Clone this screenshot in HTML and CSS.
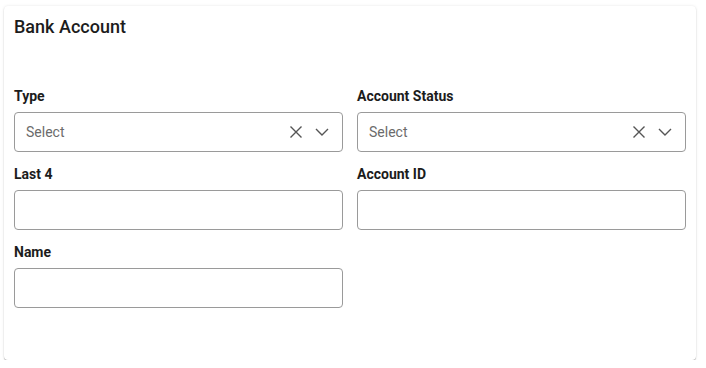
FILE: index.html
```html
<!DOCTYPE html>
<html>
<head>
<meta charset="utf-8">
<link rel="stylesheet" href="styles.css">
</head>
<body>
<div class="card">
  <h2 class="title">Bank Account</h2>
  <div class="grid">
    <div class="field">
      <label class="label">Type</label>
      <div class="input select">
        <span class="placeholder">Select</span>
        <span class="icons">
          <svg class="ic" width="16" height="16" viewBox="0 0 16 16"><path d="M2.5 2.5 L13.5 13.5 M13.5 2.5 L2.5 13.5" stroke="#555" stroke-width="1.4" fill="none"/></svg>
          <svg class="ic" width="16" height="16" viewBox="0 0 16 16"><path d="M2 5 L8 11 L14 5" stroke="#555" stroke-width="1.4" fill="none"/></svg>
        </span>
      </div>
    </div>
    <div class="field">
      <label class="label">Account Status</label>
      <div class="input select">
        <span class="placeholder">Select</span>
        <span class="icons">
          <svg class="ic" width="16" height="16" viewBox="0 0 16 16"><path d="M2.5 2.5 L13.5 13.5 M13.5 2.5 L2.5 13.5" stroke="#555" stroke-width="1.4" fill="none"/></svg>
          <svg class="ic" width="16" height="16" viewBox="0 0 16 16"><path d="M2 5 L8 11 L14 5" stroke="#555" stroke-width="1.4" fill="none"/></svg>
        </span>
      </div>
    </div>
    <div class="field">
      <label class="label">Last 4</label>
      <div class="input"></div>
    </div>
    <div class="field">
      <label class="label">Account ID</label>
      <div class="input"></div>
    </div>
    <div class="field">
      <label class="label">Name</label>
      <div class="input"></div>
    </div>
  </div>
</div>
</body>
</html>
```
FILE: styles.css
```css
html, body {
  margin: 0;
  padding: 0;
  background: #fff;
}
body {
  font-family: Roboto, "Liberation Sans", sans-serif;
  color: #1a1a1a;
}
.card {
  margin: 6px 10px 0 4px;
  height: 354px;
  box-sizing: border-box;
  padding: 11px 10px 0 10px;
  background: #fff;
  border-radius: 4px;
  box-shadow: 0 1px 1px 0 rgba(0,0,0,0.28), 0 0 3px 0 rgba(0,0,0,0.1);
}
.title {
  margin: 0;
  font-size: 18px;
  font-weight: 500;
  line-height: 20px;
  color: #1c1c1c;
}
.grid {
  margin-top: 51px;
  display: grid;
  grid-template-columns: 1fr 1fr;
  column-gap: 14px;
  row-gap: 14px;
}
.field {
  display: flex;
  flex-direction: column;
}
.label {
  font-size: 14px;
  font-weight: 700;
  line-height: 16px;
  margin-bottom: 8px;
  color: #1c1c1c;
}
.input {
  height: 40px;
  box-sizing: border-box;
  border: 1px solid #9a9a9a;
  border-radius: 4px;
  display: flex;
  align-items: center;
  padding: 0 12px 0 11px;
}
.placeholder {
  flex: 1;
  font-size: 14px;
  color: #6b6b6b;
}
.icons {
  display: flex;
  gap: 10px;
  align-items: center;
}
.ic {
  display: block;
}
```
